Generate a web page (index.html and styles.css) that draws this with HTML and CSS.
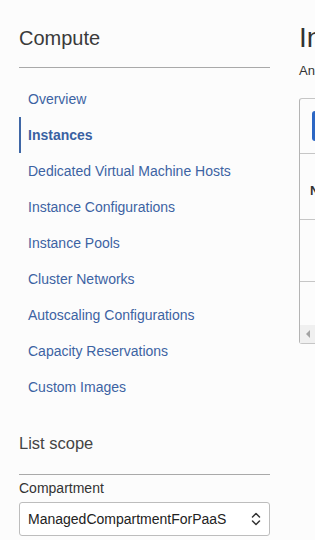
FILE: index.html
```html
<!DOCTYPE html>
<html>
<head>
<meta charset="utf-8">
<link rel="stylesheet" href="styles.css">
</head>
<body>
<div class="page">
  <aside class="sidebar">
    <h2 class="side-title">Compute</h2>
    <nav class="nav">
      <a class="nav-item">Overview</a>
      <a class="nav-item active">Instances</a>
      <a class="nav-item">Dedicated Virtual Machine Hosts</a>
      <a class="nav-item">Instance Configurations</a>
      <a class="nav-item">Instance Pools</a>
      <a class="nav-item">Cluster Networks</a>
      <a class="nav-item">Autoscaling Configurations</a>
      <a class="nav-item">Capacity Reservations</a>
      <a class="nav-item">Custom Images</a>
    </nav>
    <h3 class="scope-title">List scope</h3>
    <label class="field-label">Compartment</label>
    <div class="select">
      <span class="select-text">ManagedCompartmentForPaaS</span>
      <svg class="chev" width="10" height="14" viewBox="0 0 10 14"><path d="M1.5 5 L5 1.5 L8.5 5 M1.5 9 L5 12.5 L8.5 9" fill="none" stroke="#333" stroke-width="1.5" stroke-linecap="round" stroke-linejoin="round"/></svg>
    </div>
  </aside>
  <main class="main">
    <h1 class="main-title">Instances</h1>
    <p class="main-desc">An instance is a compute host.</p>
    <div class="table-box">
      <div class="toolbar"><span class="btn">Create</span></div>
      <div class="thead"><span class="th">Name</span></div>
      <div class="row"></div>
      <div class="row last"></div>
      <div class="hscroll"><span class="arrow"></span></div>
    </div>
  </main>
</div>
</body>
</html>
```

FILE: styles.css
```css
html, body {
  margin: 0;
  padding: 0;
  background: #fcfcfc;
  font-family: "Liberation Sans", Arial, sans-serif;
  overflow: hidden;
}
.page {
  display: flex;
  gap: 29px;
  padding-left: 19px;
  width: 600px;
}
.sidebar {
  width: 251px;
  flex: none;
  display: flex;
  flex-direction: column;
}
.side-title {
  margin: 26px 0 0;
  font-size: 20px;
  line-height: 24px;
  font-weight: normal;
  color: #3a3a3a;
  padding-bottom: 17px;
  border-bottom: 1px solid #a9a9a9;
}
.nav {
  margin-top: 13px;
  display: flex;
  flex-direction: column;
}
.nav-item {
  height: 36px;
  line-height: 36px;
  padding-left: 7px;
  font-size: 14px;
  color: #3c63a3;
  border-left: 2px solid transparent;
}
.nav-item.active {
  border-left-color: #3f67a6;
  font-weight: bold;
  color: #3961a2;
}
.scope-title {
  margin: 27px 0 0;
  font-size: 16.5px;
  line-height: 22px;
  font-weight: normal;
  color: #444;
  padding-bottom: 20px;
  border-bottom: 1px solid #a9a9a9;
}
.field-label {
  margin-top: 5px;
  font-size: 14px;
  line-height: 16px;
  color: #333;
}
.select {
  margin-top: 6px;
  height: 32px;
  border: 1px solid #bdbdbd;
  border-radius: 3px;
  background: #fff;
  display: flex;
  align-items: center;
  justify-content: space-between;
  padding: 0 8px 0 8px;
}
.select-text {
  font-size: 14px;
  color: #222;
}
.chev { display: block; }
.main {
  flex: none;
  width: 300px;
}
.main-title {
  margin: 22px 0 0;
  font-size: 28px;
  line-height: 32px;
  font-weight: normal;
  color: #333;
}
.main-desc {
  margin: 9px 0 0;
  font-size: 13px;
  line-height: 16px;
  color: #333;
}
.table-box {
  margin-top: 19px;
  border: 1px solid #c6c6c6;
  border-left-color: #b4b4b4;
  border-radius: 3px;
  width: 280px;
  background: #fcfcfc;
}
.toolbar {
  height: 55px;
  padding: 12px 0 0 12px;
  box-sizing: border-box;
  border-bottom: 1px solid #c6c6c6;
}
.btn {
  display: inline-block;
  height: 30px;
  padding: 0 12px;
  background: #2c67c4;
  color: #fff;
  border-radius: 3px;
  font-size: 13px;
  line-height: 30px;
}
.thead {
  height: 66px;
  box-sizing: border-box;
  padding: 8px 0 0 10px;
  border-bottom: 1px solid #c6c6c6;
  display: flex;
  align-items: center;
}
.th {
  font-size: 13px;
  font-weight: bold;
  color: #333;
}
.row {
  height: 61px;
  border-bottom: 1px solid #c6c6c6;
}
.row.last {
  height: 43px;
  border-bottom: none;
}
.hscroll {
  height: 18px;
  background: #f0f0f0;
  display: flex;
  align-items: center;
  padding-left: 6px;
}
.arrow {
  width: 0;
  height: 0;
  border-top: 4px solid transparent;
  border-bottom: 4px solid transparent;
  border-right: 4px solid #a3a3a3;
}
```
